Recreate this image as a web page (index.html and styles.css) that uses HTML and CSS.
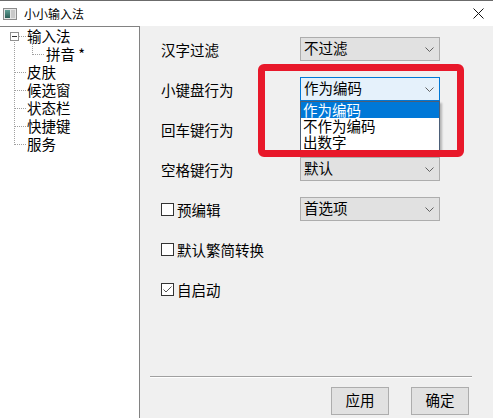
FILE: index.html
```html
<!DOCTYPE html>
<html lang="zh-CN">
<head>
<meta charset="utf-8">
<title>小小输入法</title>
<link rel="stylesheet" href="styles.css">
</head>
<body>
<div class="window">
  <div class="titlebar">
    <svg class="app-icon" width="14" height="12" viewBox="0 0 14 12">
      <defs>
        <linearGradient id="g1" x1="0" y1="0" x2="0" y2="1">
          <stop offset="0" stop-color="#5f9e94"/>
          <stop offset="1" stop-color="#2c5e57"/>
        </linearGradient>
      </defs>
      <rect x="0.5" y="0.5" width="13" height="11" fill="#e6e6e6" stroke="#8c8c8c"/>
      <rect x="2" y="2" width="5" height="8" fill="url(#g1)"/>
      <rect x="8" y="2" width="4" height="8" fill="#c9c9c9"/>
    </svg>
    <span class="title">小小输入法</span>
    <svg class="close" width="11" height="11" viewBox="0 0 11 11">
      <path d="M0.5 0.5 L10.5 10.5 M10.5 0.5 L0.5 10.5" stroke="#111" stroke-width="1"/>
    </svg>
  </div>
  <div class="main">
    <div class="tree">
      <div class="node root"><span class="expander"></span><span class="twig"></span><span class="label">输入法</span></div>
      <div class="node sub"><span class="twig"></span><span class="label">拼音 *</span></div>
      <div class="node"><span class="twig"></span><span class="label">皮肤</span></div>
      <div class="node"><span class="twig"></span><span class="label">候选窗</span></div>
      <div class="node"><span class="twig"></span><span class="label">状态栏</span></div>
      <div class="node"><span class="twig"></span><span class="label">快捷键</span></div>
      <div class="node"><span class="twig"></span><span class="label">服务</span></div>
    </div>
    <div class="panel">
      <div class="form">
        <div class="flabel">汉字过滤</div>
        <div class="combo"><span>不过滤</span><svg class="chev" width="9" height="5" viewBox="0 0 9 5"><path d="M0.5 0.5 L4.5 4.5 L8.5 0.5" fill="none" stroke="#606060"/></svg></div>

        <div class="flabel">小键盘行为</div>
        <div class="combo-wrap">
          <div class="combo focus"><span>作为编码</span><svg class="chev" width="9" height="5" viewBox="0 0 9 5"><path d="M0.5 0.5 L4.5 4.5 L8.5 0.5" fill="none" stroke="#606060"/></svg></div>
          <div class="dropdown">
            <div class="opt sel">作为编码</div>
            <div class="opt">不作为编码</div>
            <div class="opt">出数字</div>
          </div>
        </div>

        <div class="flabel">回车键行为</div>
        <div class="combo"><span></span><svg class="chev" width="9" height="5" viewBox="0 0 9 5"><path d="M0.5 0.5 L4.5 4.5 L8.5 0.5" fill="none" stroke="#606060"/></svg></div>

        <div class="flabel">空格键行为</div>
        <div class="combo"><span>默认</span><svg class="chev" width="9" height="5" viewBox="0 0 9 5"><path d="M0.5 0.5 L4.5 4.5 L8.5 0.5" fill="none" stroke="#606060"/></svg></div>

        <div class="flabel check"><span class="box"></span>预编辑</div>
        <div class="combo"><span>首选项</span><svg class="chev" width="9" height="5" viewBox="0 0 9 5"><path d="M0.5 0.5 L4.5 4.5 L8.5 0.5" fill="none" stroke="#606060"/></svg></div>

        <div class="flabel check wide"><span class="box"></span>默认繁简转换</div>

        <div class="flabel check wide"><span class="box checked"><svg width="11" height="11" viewBox="0 0 11 11"><path d="M1.5 5.5 L4 8 L9.5 2.5" fill="none" stroke="#555" stroke-width="1"/></svg></span>自启动</div>
      </div>
      <div class="sep"></div>
      <div class="buttons">
        <div class="btn">应用</div>
        <div class="btn">确定</div>
      </div>
    </div>
  </div>
  <div class="annot"></div>
</div>
</body>
</html>
```
FILE: styles.css
```css
* { box-sizing: border-box; }
html, body { margin: 0; padding: 0; }
body {
  background: #f0f0f0;
  font-family: "Noto Sans CJK SC", "Noto Sans", sans-serif;
  color: #000;
}
.window {
  position: relative;
  width: 493px;
  height: 418px;
  display: flex;
  flex-direction: column;
  overflow: hidden;
}
.titlebar {
  height: 26px;
  flex: none;
  background: #fff;
  border-top: 1px solid #6b6b6b;
  display: flex;
  align-items: center;
  padding-left: 3px;
  padding-right: 9px;
}
.app-icon { display: block; flex: none; }
.title {
  font-size: 12px;
  line-height: 14px;
  margin-left: 7px;
  flex: 1;
}
.close { display: block; flex: none; }

.main {
  flex: 1;
  display: flex;
  min-height: 0;
}
.tree {
  position: relative;
  width: 140px;
  flex: none;
  background: #fff;
  border-top: 1px solid #828282;
  border-right: 1px solid #828282;
}
.tree::before {
  content: "";
  position: absolute;
  left: 14px;
  top: 15px;
  height: 103px;
  border-left: 1px dotted #a0a0a0;
}
.node {
  height: 18px;
  display: flex;
  align-items: center;
  font-size: 14.5px;
  line-height: 18px;
}
.node .twig {
  width: 11px;
  margin-left: 15px;
  border-top: 1px dotted #a0a0a0;
  position: relative;
}
.node .label { margin-left: 1px; white-space: nowrap; }
.node.root .expander {
  width: 9px;
  height: 9px;
  margin-left: 10px;
  border: 1px solid #919191;
  background: #fff;
  position: relative;
  z-index: 1;
}
.node.root .expander::after {
  content: "";
  position: absolute;
  left: 1px;
  top: 3px;
  width: 5px;
  border-top: 1px solid #333;
}
.node.root .twig { margin-left: 0; width: 7px; }
.node.sub .twig { margin-left: 33px; width: 11px; }
.node.sub .twig::before {
  content: "";
  position: absolute;
  left: -1px;
  top: -12px;
  height: 12px;
  border-left: 1px dotted #a0a0a0;
}
.node.sub .label { margin-left: 2px; }

.panel {
  flex: 1;
  display: flex;
  flex-direction: column;
  padding-top: 11px;
}
.form {
  display: grid;
  grid-template-columns: 139px 140px;
  grid-auto-rows: 24px;
  row-gap: 16px;
  margin-left: 21px;
  font-size: 14.5px;
}
.flabel {
  display: flex;
  align-items: center;
  line-height: 18px;
  padding-top: 1px;
  white-space: nowrap;
}
.flabel.wide { grid-column: 1 / 3; }
.box {
  width: 13px;
  height: 13px;
  border: 1px solid #333;
  background: #fff;
  margin-right: 3px;
  flex: none;
  display: flex;
  align-items: center;
  justify-content: center;
}
.box svg { display: block; }
.combo-wrap { position: relative; }
.combo {
  height: 24px;
  width: 140px;
  border: 1px solid #adadad;
  background: #e1e1e1;
  display: flex;
  align-items: center;
  padding-left: 3px;
  padding-right: 5px;
  line-height: 18px;
}
.combo span { flex: 1; margin-top: -2px; }
.combo.focus {
  border-color: #0078d7;
  background: #e5f1fb;
}
.chev { display: block; flex: none; }
.dropdown {
  position: absolute;
  left: 0;
  top: 24px;
  width: 140px;
  background: #fff;
  border: 1px solid #4c5f78;
  box-shadow: 2px 2px 2px rgba(0, 0, 0, 0.25);
  z-index: 2;
}
.opt {
  height: 16px;
  line-height: 16px;
  padding-left: 2px;
  white-space: nowrap;
}
.opt.sel { background: #0078d7; color: #fff; }

.sep {
  margin-top: auto;
  margin-left: 10px;
  margin-right: 21px;
  height: 2px;
  border-top: 1px solid #a0a0a0;
  border-bottom: 1px solid #fff;
}
.buttons {
  display: flex;
  justify-content: flex-end;
  gap: 22px;
  padding-right: 24px;
  margin-top: 9px;
  margin-bottom: 3px;
}
.btn {
  width: 58px;
  height: 28px;
  background: #e1e1e1;
  border: 1px solid #adadad;
  font-size: 14.5px;
  line-height: 24px;
  text-align: center;
}

.annot {
  position: absolute;
  left: 258px;
  top: 64px;
  width: 206px;
  height: 93px;
  border: 7px solid #e8182a;
  border-radius: 6px;
  z-index: 5;
}
```
